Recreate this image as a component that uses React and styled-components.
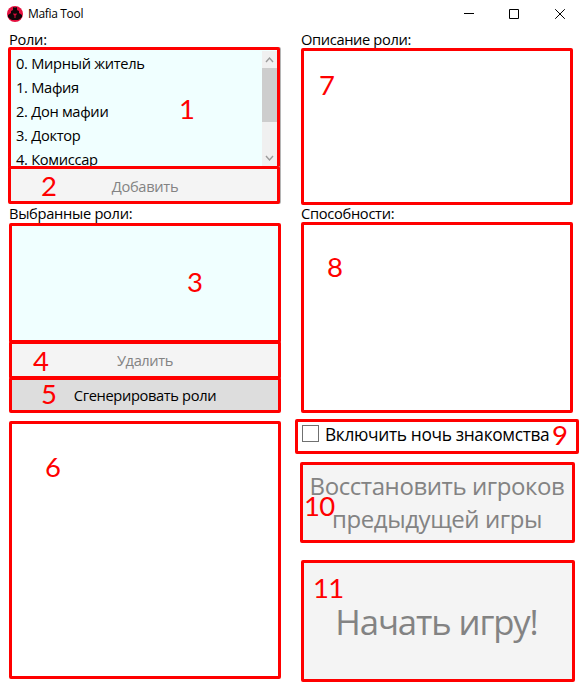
import React from "react";
import styled, { createGlobalStyle } from "styled-components";

const GlobalStyle = createGlobalStyle`
  * { box-sizing: border-box; }
  body { margin: 0; background: #fff; overflow: hidden; }
  button { font: inherit; margin: 0; }
`;

const Window = styled.div`
  display: flex;
  flex-direction: column;
  width: 581px;
  height: 688px;
  background: #fff;
  color: #000;
  font: 14.67px/20px "Open Sans", "Noto Sans", sans-serif;
  letter-spacing: -0.3px;
  white-space: nowrap;
`;

const TitleBar = styled.header`
  display: flex;
  align-items: center;
  height: 27px;
  flex: none;
  padding-left: 7px;
  font: 12px/16px "Open Sans", "Noto Sans", sans-serif;
  letter-spacing: -0.33px;
`;

const AppIcon = styled.svg`
  width: 16px;
  height: 16px;
  margin-right: 5px;
`;

const WindowControls = styled.nav`
  display: flex;
  margin-left: auto;
`;

const WindowButton = styled.button`
  display: grid;
  place-items: center;
  width: ${(p) => p.$width}px;
  height: 27px;
  padding: 0;
  border: 0;
  background: none;
`;

const Content = styled.main`
  display: grid;
  grid-template-columns: 272px 280px;
  column-gap: 15px;
  padding-left: 9px;
`;

const Column = styled.section`
  display: flex;
  flex-direction: column;
  padding-left: ${(p) => p.$left || 0}px;
`;

const Caption = styled.label`
  display: block;
  height: ${(p) => p.$height}px;
  line-height: ${(p) => p.$line || 24}px;
  letter-spacing: ${(p) => p.$spacing || -0.3}px;
`;

const Frame = styled.div`
  position: relative;
  flex: none;
  width: ${(p) => p.$width || 272}px;
  height: ${(p) => p.$height}px;
  margin-top: ${(p) => p.$gap || 0}px;
  margin-left: ${(p) => p.$shift || 0}px;
  border: 3px solid #f00;
  border-radius: 2px;
  background: ${(p) => p.$fill || "#fff"};
  box-shadow: ${(p) => (p.$edge ? "1px 0 0 #b5b5b5" : "none")};
`;

const RoleFrame = styled(Frame)`
  display: flex;
`;

const RoleList = styled.ul`
  flex: 1;
  height: 116px;
  margin: 0;
  padding: 1px 0 0 5px;
  overflow: hidden;
  list-style: none;
`;

const RoleItem = styled.li`
  height: 24px;
  line-height: 24px;
`;

const ScrollBar = styled.div`
  display: flex;
  flex-direction: column;
  align-items: center;
  width: 15px;
  height: 115px;
  margin-top: 1px;
  background: #f0f0f0;
`;

const ScrollArrow = styled.svg`
  width: 17px;
  height: 17px;
  flex: none;
`;

const ScrollThumb = styled.div`
  width: 15px;
  height: 54px;
  margin-bottom: auto;
  background: #cdcdcd;
`;

const ActionButton = styled(Frame).attrs({ as: "button" })`
  display: flex;
  align-items: center;
  justify-content: center;
  padding: ${(p) => p.$pad || "0"};
  color: ${(p) => (p.$enabled ? "#000" : "#838383")};
  background: ${(p) => (p.$enabled ? "#ddd" : "#f4f4f4")};
  font-size: ${(p) => p.$size || 14.67}px;
  line-height: ${(p) => p.$line || 20}px;
  letter-spacing: ${(p) => p.$spacing ?? -0.3}px;
`;

const Marker = styled.span`
  position: absolute;
  left: ${(p) => p.$x}px;
  top: ${(p) => p.$y}px;
  color: #f00;
  font: 27.5px/26px Lato, "Open Sans", sans-serif;
  letter-spacing: -0.6px;
`;

const CheckRow = styled(Frame)`
  display: flex;
  padding: 3px 0 0 4px;
`;

const CheckBox = styled.span`
  width: 17px;
  height: 17px;
  border: 1px solid #707070;
  background: #fff;
`;

const CheckText = styled.span`
  margin: -3px 0 0 6px;
  font-size: 17.33px;
  line-height: 24px;
  letter-spacing: -0.34px;
`;

const roles = ["Мирный житель", "Мафия", "Дон мафии", "Доктор", "Комиссар"];

export default function App() {
  return (
    <>
      <GlobalStyle />
      <Window>
        <TitleBar>
          <AppIcon viewBox="0 0 16 16">
            <circle cx="8" cy="8" r="8" fill="#e5103f" />
            <path d="M6 4V1.500L7 1l1 1 1-1 1 .5V4l2 1v2l3 2v2l-2 2-2 1H5l-2-1-2-2V9l3-2V5z" fill="#100508" />
            <path d="m6.500 7 1.500 1 1.500-1v2l-1 .5V12h-1V9.500l-1-.5z" fill="#d50e3a" />
          </AppIcon>
          Mafia Tool
          <WindowControls>
            <WindowButton $width={40}><svg width="10" height="11"><path d="M0 5.5h10" stroke="#000" /></svg></WindowButton>
            <WindowButton $width={50}><svg width="10" height="10"><path d="M.5.5h9v9h-9z" fill="none" stroke="#000" /></svg></WindowButton>
            <WindowButton $width={42}><svg width="10" height="10"><path d="m.2.2 9.600 9.600m0-9.600L.2 9.800" fill="none" stroke="#000" /></svg></WindowButton>
          </WindowControls>
        </TitleBar>
        <Content>
          <Column>
            <Caption $height={20}>Роли:</Caption>
            <RoleFrame $height={122} $shift={-1} $fill="#f0ffff" $edge>
              <RoleList>
                {roles.map((role, i) => <RoleItem key={role}>{i}. {role}</RoleItem>)}
              </RoleList>
              <ScrollBar>
                <ScrollArrow viewBox="0 0 17 17"><path d="m5 11 3.500-4 3.500 4" fill="none" stroke="#9b9b9b" strokeWidth="1.4" /></ScrollArrow>
                <ScrollThumb />
                <ScrollArrow viewBox="0 0 17 17"><path d="m5 7 3.500 4L12 7" fill="none" stroke="#9b9b9b" strokeWidth="1.4" /></ScrollArrow>
              </ScrollBar>
              <Marker $x={168} $y={46}>1</Marker>
            </RoleFrame>
            <ActionButton $height={38} $gap={-3} $shift={-1} $pad="2px 0 0 2px" $edge>
              Добавить
              <Marker $x={30} $y={4}>2</Marker>
            </ActionButton>
            <Caption $height={19} $line={18}>Выбранные роли:</Caption>
            <Frame $height={120} $fill="#f0ffff"><Marker $x={175} $y={43}>3</Marker></Frame>
            <ActionButton $height={38} $gap={-2} $spacing={-0.4}>
              Удалить
              <Marker $x={21} $y={4}>4</Marker>
            </ActionButton>
            <ActionButton $height={36} $gap={-2} $enabled $spacing={-0.36}>
              Сгенерировать роли
              <Marker $x={29} $y={1}>5</Marker>
            </ActionButton>
            <Frame $height={258} $gap={8}><Marker $x={33} $y={30}>6</Marker></Frame>
          </Column>
          <Column $left={5}>
            <Caption $height={21} $spacing={-0.36}>Описание роли:</Caption>
            <Frame $height={157}><Marker $x={15} $y={21}>7</Marker></Frame>
            <Caption $height={17} $line={17}>Способности:</Caption>
            <Frame $height={191}><Marker $x={23} $y={29}>8</Marker></Frame>
            <CheckRow $width={284} $height={35} $gap={6} $shift={-6}>
              <CheckBox />
              <CheckText>Включить ночь знакомства</CheckText>
              <Marker $x={254} $y={0}>9</Marker>
            </CheckRow>
            <ActionButton $width={275} $height={81} $gap={8} $shift={-1} $size={24} $line={33} $spacing={-0.42} $pad="0 1px 1px 0">
              <span>Восстановить игроков<br />предыдущей игры</span>
              <Marker $x={1} $y={28}>10</Marker>
            </ActionButton>
            <ActionButton $width={274} $height={122} $gap={17} $size={34.67} $line={46} $spacing={-1.1} $pad="2px 3px 0 0">
              Начать игру!
              <Marker $x={9} $y={12}>11</Marker>
            </ActionButton>
          </Column>
        </Content>
      </Window>
    </>
  );
}
